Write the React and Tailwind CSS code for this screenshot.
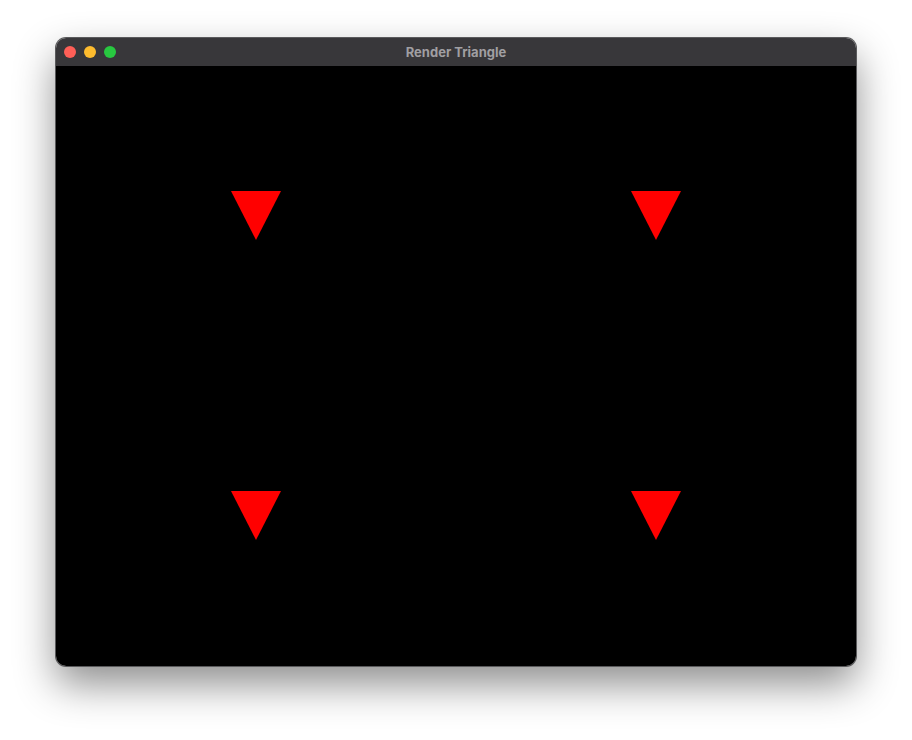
const Triangle = () => (
  <svg width="50" height="50" viewBox="0 0 50 50" className="block">
    <polygon points="0,0 50,0 25,49" fill="#ff0000" />
  </svg>
);

export default function App() {
  return (
    <div className="w-[912px] h-[740px] bg-white flex justify-center pt-[38px]" style={{ fontFamily: 'Inter, "Noto Sans", sans-serif' }}>
      <div className="relative w-[800px] h-[628px] rounded-[10px] overflow-hidden shadow-[0_0_0_1px_#5a5a5c,0_18px_40px_rgba(0,0,0,0.45)] flex flex-col">
        {/* title bar */}
        <div className="relative h-[28px] bg-[#38373a] flex items-center justify-center shrink-0">
          <div className="absolute left-[8px] top-[8px] flex gap-[8px]">
            <span className="w-[12px] h-[12px] rounded-full bg-[#ff5f57]" />
            <span className="w-[12px] h-[12px] rounded-full bg-[#febc2e]" />
            <span className="w-[12px] h-[12px] rounded-full bg-[#28c840]" />
          </div>
          <span className="text-[13px] font-bold text-[#a09fa2] leading-none">Render Triangle</span>
        </div>
        {/* content */}
        <div className="flex-1 bg-black grid grid-cols-2 grid-rows-2">
          {[0, 1, 2, 3].map((i) => (
            <div key={i} className="flex items-center justify-center">
              <Triangle />
            </div>
          ))}
        </div>
      </div>
    </div>
  );
}
